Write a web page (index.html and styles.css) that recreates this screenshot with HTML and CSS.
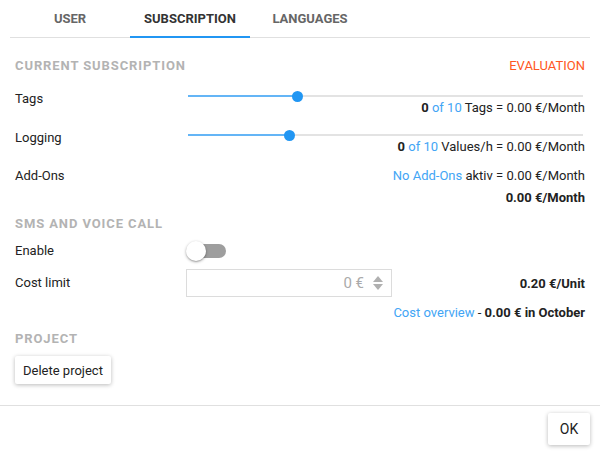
FILE: index.html
```html
<!DOCTYPE html>
<html>
<head>
<meta charset="utf-8">
<link rel="stylesheet" href="styles.css">
</head>
<body>
<div class="dialog">
  <div class="tabs">
    <div class="tab">USER</div>
    <div class="tab active">SUBSCRIPTION</div>
    <div class="tab">LANGUAGES</div>
  </div>
  <div class="content">
    <div class="section-head head-first">
      <span class="section-title">CURRENT SUBSCRIPTION</span>
      <span class="status">EVALUATION</span>
    </div>

    <div class="row slider-row">
      <div class="label">Tags</div>
      <div class="control">
        <div class="slider"><div class="track"><div class="fill" style="width:27.6%"></div><div class="thumb" style="left:27.6%"></div></div></div>
        <div class="value"><b>0</b> <span class="link">of 10</span> Tags = 0.00 €/Month</div>
      </div>
    </div>

    <div class="row slider-row row-logging">
      <div class="label">Logging</div>
      <div class="control">
        <div class="slider"><div class="track"><div class="fill" style="width:25.6%"></div><div class="thumb" style="left:25.6%"></div></div></div>
        <div class="value"><b>0</b> <span class="link">of 10</span> Values/h = 0.00 €/Month</div>
      </div>
    </div>

    <div class="row row-addons">
      <div class="label">Add-Ons</div>
      <div class="control value-plain"><span class="link">No Add-Ons</span> aktiv = 0.00 €/Month</div>
    </div>

    <div class="total">0.00 €/Month</div>

    <div class="section-head head-sms">
      <span class="section-title">SMS AND VOICE CALL</span>
    </div>

    <div class="row row-enable">
      <div class="label">Enable</div>
      <div class="control">
        <div class="toggle"><div class="toggle-track"></div><div class="toggle-thumb"></div></div>
      </div>
    </div>

    <div class="row row-cost">
      <div class="label">Cost limit</div>
      <div class="control cost-control">
        <div class="num-input">
          <span class="num-value">0 €</span>
          <svg class="spin" width="10" height="16" viewBox="0 0 10 16"><path d="M5 1 L10 7 L0 7 Z" fill="#b0b0b0"/><path d="M0 9 L10 9 L5 15 Z" fill="#b0b0b0"/></svg>
        </div>
        <div class="unit"><b>0.20 €/Unit</b></div>
      </div>
    </div>

    <div class="overview"><span class="link">Cost overview</span> - <b>0.00 € in October</b></div>

    <div class="section-head head-project">
      <span class="section-title">PROJECT</span>
    </div>
    <div class="btn-row"><button class="btn">Delete project</button></div>
  </div>
  <div class="footer">
    <button class="btn btn-ok">OK</button>
  </div>
</div>
</body>
</html>
```

FILE: styles.css
```css
* { box-sizing: border-box; }
html, body {
  margin: 0;
  padding: 0;
  background: #fff;
}
body {
  font-family: Roboto, "Noto Sans", "Liberation Sans", sans-serif;
  font-size: 13px;
  color: #222;
  width: 600px;
  height: 454px;
  overflow: hidden;
}
.dialog { display: flex; flex-direction: column; }

.tabs {
  display: flex;
  margin: 0 10px;
  border-bottom: 1px solid #e0e0e0;
  height: 38px;
}
.tab {
  position: relative;
  width: 120px;
  height: 37px;
  display: flex;
  align-items: center;
  justify-content: center;
  font-size: 13px;
  font-weight: 700;
  color: #666;
}
.tab.active { color: #333; }
.tab.active::after {
  content: "";
  position: absolute;
  left: 0;
  right: 0;
  bottom: -1px;
  height: 2px;
  background: #2196f3;
}

.content {
  padding: 0 15px;
  display: flex;
  flex-direction: column;
}
.section-head {
  display: flex;
  justify-content: space-between;
  align-items: center;
  height: 16px;
}
.section-title {
  font-size: 13px;
  font-weight: 700;
  letter-spacing: 0.9px;
  color: #b3b3b3;
  line-height: 16px;
}
.status {
  color: #ff5722;
  font-size: 13px;
  line-height: 16px;
}
.head-first { margin-top: 20px; }
.head-sms { margin-top: 10px; }
.head-project { margin-top: 10px; }

.row { display: flex; }
.label {
  width: 171px;
  flex: none;
  line-height: 16px;
}
.control { flex: 1; display: flex; flex-direction: column; }

.slider-row { margin-top: 15px; }
.slider-row .label { padding-top: 2px; }
.row-logging { margin-top: 12px; }
.slider { height: 14px; display: flex; align-items: center; padding: 0 2px; }
.track {
  position: relative;
  height: 2px;
  width: 100%;
  background: #e3e3e3;
}
.fill {
  height: 2px;
  background: #64b5f6;
}
.thumb {
  position: absolute;
  top: 50%;
  width: 11px;
  height: 11px;
  margin: -5.5px 0 0 -5.5px;
  border-radius: 50%;
  background: #2196f3;
}
.value {
  margin-top: -3px;
  text-align: right;
  line-height: 16px;
}
.value b, .unit b, .overview b, .total { font-weight: 700; }
.link { color: #42a5f5; }

.row-addons { margin-top: 13px; }
.value-plain { text-align: right; line-height: 16px; display: block; }
.total {
  margin-top: 6px;
  text-align: right;
  line-height: 16px;
}

.row-enable { margin-top: 9px; height: 20px; align-items: center; }
.row-enable .label { line-height: 20px; }
.toggle { position: relative; width: 40px; height: 20px; }
.toggle-track {
  position: absolute;
  left: 2px;
  top: 3px;
  width: 38px;
  height: 14px;
  border-radius: 7px;
  background: #9e9e9e;
}
.toggle-thumb {
  position: absolute;
  left: 0;
  top: 0;
  width: 20px;
  height: 20px;
  border-radius: 50%;
  background: #fff;
  box-shadow: 0 1px 3px rgba(0,0,0,0.35), 0 1px 1px rgba(0,0,0,0.12);
}

.row-cost { margin-top: 8px; align-items: center; }
.row-cost .label { line-height: 16px; }
.cost-control { flex-direction: row; align-items: center; }
.num-input {
  width: 206px;
  height: 28px;
  border: 1px solid #dcdcdc;
  display: flex;
  align-items: center;
  justify-content: flex-end;
  padding-right: 8px;
  color: #aaa;
  font-size: 15px;
}
.num-value { margin-right: 9px; }
.spin { display: block; }
.unit { flex: 1; text-align: right; }

.overview {
  margin-top: 8px;
  text-align: right;
  line-height: 16px;
}

.btn-row { margin-top: 9px; display: flex; }
.btn {
  font-family: Roboto, "Noto Sans", "Liberation Sans", sans-serif;
  font-size: 13px;
  color: #222;
  background: #fff;
  border: none;
  border-radius: 2px;
  height: 28px;
  padding: 0 8px;
  box-shadow: 0 1px 4px rgba(0,0,0,0.28);
}
.footer {
  margin-top: 21px;
  border-top: 1px solid #e0e0e0;
  display: flex;
  justify-content: flex-end;
  padding: 7px 10px 0 0;
}
.btn-ok {
  width: 42px;
  height: 32px;
  padding: 0;
  font-size: 14px;
}
```
